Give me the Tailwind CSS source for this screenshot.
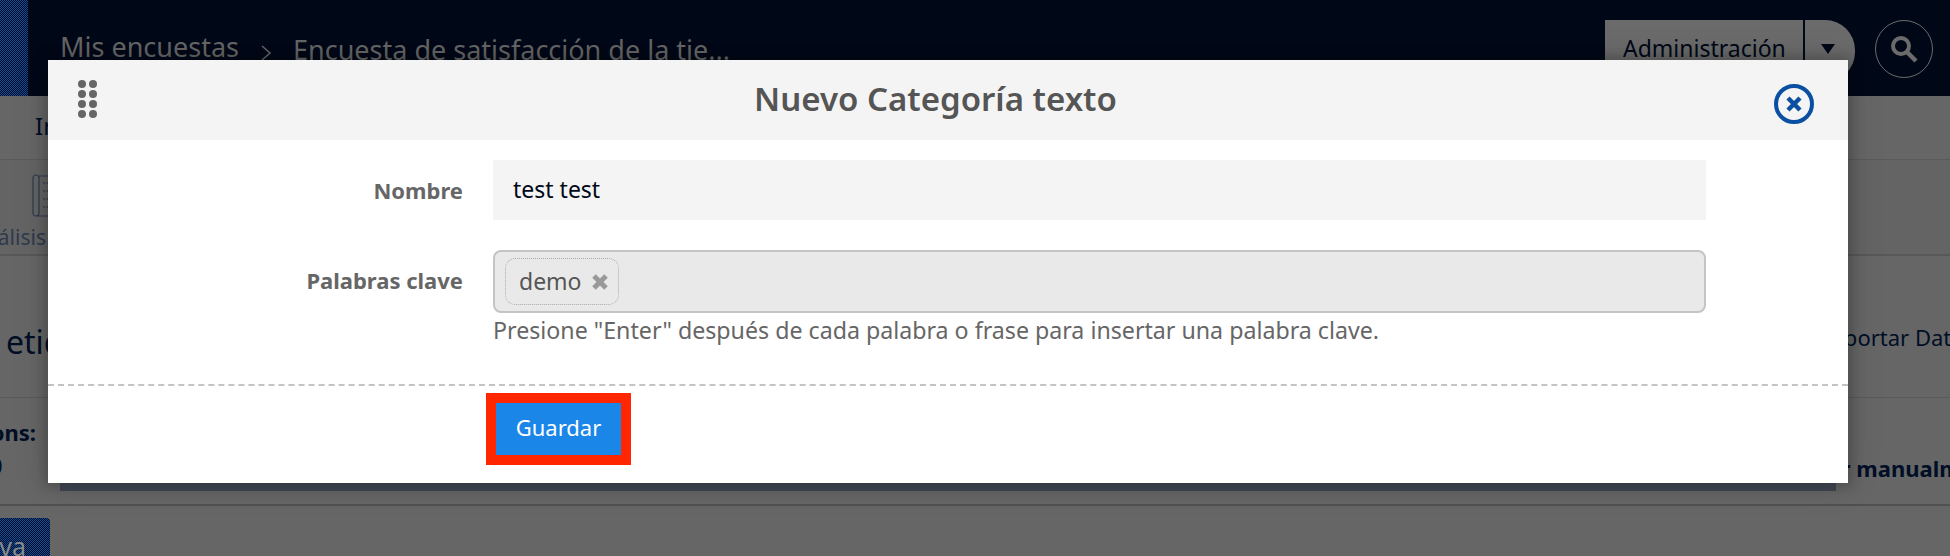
<!DOCTYPE html>
<html lang="es">
<head>
<meta charset="utf-8">
<title>Nuevo Categoría texto</title>
<script src="https://cdn.jsdelivr.net/npm/@tailwindcss/browser@4"></script>
</head>
<body class="relative h-[556px] w-[1950px] overflow-hidden bg-[#666666] font-['Noto_Sans',sans-serif]">

<!-- Page behind the modal -->
<header class="flex h-[96px] bg-[#000817]">
  <div class="w-[28px] bg-[repeating-conic-gradient(#000817_0_25%,#0b4fa3_0_50%)] bg-[length:2px_2px]"></div>
  <div class="flex flex-1 items-start pt-[25px] pl-[32px] text-[#666666]">
    <span class="text-[27px] leading-[44px]">Mis encuestas</span>
    <svg class="mx-[20px] mt-[19px] h-[18px] w-[14px]" viewBox="0 0 14 18" fill="none" stroke="#666666" stroke-width="1.6"><path d="M3 2l8 7-8 7"/></svg>
    <span class="mt-[3px] text-[27px] leading-[44px] whitespace-nowrap">Encuesta de satisfacción de la tie...</span>
  </div>
  <div class="mt-[20px] flex h-[62px] w-[250px] rounded-r-[30px] bg-[#6b6b6b]">
    <div class="flex-1 border-r-2 border-[#000817] pt-[13px] pl-[18px] text-[23px] leading-[30px] text-[#000817]">Administración</div>
    <div class="w-[50px] pt-[24px] pl-[16px]">
      <svg class="h-[10px] w-[14px]" viewBox="0 0 14 10" fill="#000817"><path d="M0 0h14L7 10z"/></svg>
    </div>
  </div>
  <div class="mt-[20px] mr-[17px] ml-[20px] flex h-[58px] w-[58px] items-center justify-center rounded-full border-[1.5px] border-[#6b6b6b]">
    <svg class="h-[30px] w-[30px]" viewBox="0 0 30 30" fill="none" stroke="#6b6b6b"><circle cx="12" cy="12" r="8" stroke-width="4"/><path d="M18 18l9 9" stroke-width="4.5"/></svg>
  </div>
</header>

<div class="h-[64px] border-b border-[#5a5a5a] pt-[14px] pl-[35px] text-[24px] leading-[32px] whitespace-nowrap text-[#000e26]">Información</div>

<div class="relative h-[96px] border-b-2 border-[#585858] bg-[#646464]">
  <svg class="absolute top-[13px] left-[32px] h-[44px] w-[20px]" viewBox="0 0 20 44" fill="none" stroke="#2e3a4c" stroke-width="1.2"><path d="M7 3h13M1 40V5a3 3 0 0 1 6 0v35a3 3 0 0 1-6 0zM4 43h16"/><path d="M11 10h9M11 18h9M11 26h9M11 34h9" stroke-dasharray="2 1"/></svg>
  <div class="flex w-[46px] justify-end pt-[63px] text-[21px] leading-[28px] whitespace-nowrap text-[#2e3a4c]">Análisis</div>
</div>

<div class="flex h-[142px] items-start justify-between border-b border-[#5a5a5a] pt-[66px] text-[#000e26]">
  <div class="w-[48px] pl-[6px] text-[32px] leading-[40px] whitespace-nowrap">etiquetas</div>
  <div class="w-[102px] text-[22px] leading-[30px] whitespace-nowrap"><span class="-ml-[28px]">Exportar Datos</span></div>
</div>

<div class="flex h-[108px] items-start justify-between border-b-2 border-[#505050] pt-[19px] text-[#000e26]">
  <div class="flex w-[36px] flex-col items-end text-[22px] leading-[30px] font-bold whitespace-nowrap">
    <span>Options:</span>
    <span class="-ml-[10px] mt-[3px] w-[46px] font-normal">0</span>
  </div>
  <div class="w-[102px] pt-[36px] text-[22px] leading-[30px] font-bold whitespace-nowrap"><span class="-ml-[86px]">Agregar manualmente</span></div>
</div>

<div class="mt-[12px] flex h-[40px] w-[50px] items-end justify-end overflow-hidden rounded-r-[4px] bg-[repeating-conic-gradient(#000817_0_25%,#0b4fa3_0_50%)] bg-[length:2px_2px] pr-[24px] text-[25px] leading-[24px] text-[#8a8a8a]">Nueva</div>

<!-- Modal -->
<div class="absolute top-[60px] left-[48px] w-[1800px] bg-white shadow-[0_20px_0_-12px_rgba(35,45,60,0.6),0_0_12px_4px_rgba(0,0,0,0.2),0_0_36px_rgba(0,0,0,0.12)]">
  <div class="flex h-[80px] items-center bg-[#f4f4f4] pr-[34px] pl-[30px]">
    <div class="grid grid-cols-2 gap-x-[3px] gap-y-[2px] self-start pt-[20px]">
      <span class="h-[8px] w-[8px] rounded-full bg-[#666666]"></span><span class="h-[8px] w-[8px] rounded-full bg-[#666666]"></span>
      <span class="h-[8px] w-[8px] rounded-full bg-[#666666]"></span><span class="h-[8px] w-[8px] rounded-full bg-[#666666]"></span>
      <span class="h-[8px] w-[8px] rounded-full bg-[#666666]"></span><span class="h-[8px] w-[8px] rounded-full bg-[#666666]"></span>
      <span class="h-[8px] w-[8px] rounded-full bg-[#666666]"></span><span class="h-[8px] w-[8px] rounded-full bg-[#666666]"></span>
    </div>
    <h1 class="-mt-[2px] flex-1 text-center text-[33px] leading-[40px] font-semibold text-[#555555]">Nuevo Categoría texto</h1>
    <svg class="mt-[8px] h-[40px] w-[40px]" viewBox="0 0 40 40" fill="none" stroke="#0b4fa3"><circle cx="20" cy="20" r="18" stroke-width="4"/><path d="M14 14l12 12M26 14L14 26" stroke-width="4.5"/></svg>
  </div>

  <div class="grid grid-cols-[415px_1213px] gap-x-[30px] gap-y-[30px] pt-[20px]">
    <label class="text-right text-[22px] leading-[60px] font-bold text-[#666666]">Nombre</label>
    <div class="h-[60px] bg-[#f4f4f4] pl-[20px] text-[23px] leading-[58px] text-[#000817]">test test</div>

    <label class="text-right text-[22px] leading-[60px] font-bold text-[#666666]">Palabras clave</label>
    <div>
      <div class="h-[63px] rounded-[8px] border-2 border-[#c4c4c4] bg-[#e9e9e9] pt-[6px] pl-[10px]">
        <div class="flex h-[47px] w-[114px] items-center rounded-[10px] border border-dotted border-[#aaaaaa] pl-[13px] text-[23px] text-[#555555]">
          demo
          <svg class="ml-[10px] h-[16px] w-[16px]" viewBox="0 0 16 16" stroke="#999999" stroke-width="5"><path d="M2 2l12 12M14 2L2 14"/></svg>
        </div>
      </div>
      <p class="pt-[2px] text-[23.2px] leading-[30px] whitespace-nowrap text-[#666666]">Presione "Enter" después de cada palabra o frase para insertar una palabra clave.</p>
    </div>
  </div>

  <div class="mt-[39px] h-[99px] border-t-2 border-dashed border-[#c4c4c4] pt-[7px] pl-[438px]">
    <div class="w-fit border-[10px] border-[#ff2600]">
      <button class="h-[52px] w-[125px] bg-[#1a86e8] pb-[3px] text-[22px] text-white">Guardar</button>
    </div>
  </div>
</div>

</body>
</html>
